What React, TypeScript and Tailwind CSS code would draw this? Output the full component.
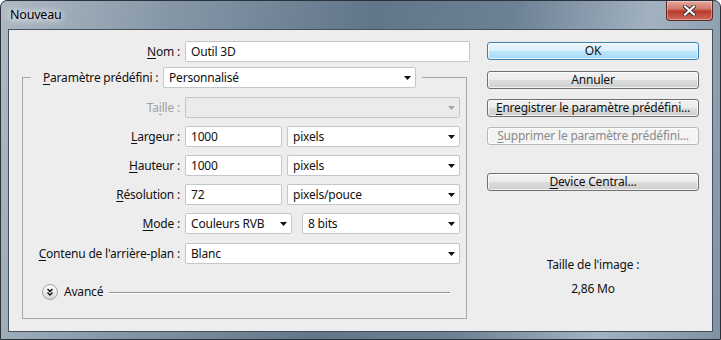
import clsx from "clsx";
import type { ReactNode } from "react";

function Arrow({ disabled }: { disabled?: boolean }) {
  return (
    <svg width="7" height="4" viewBox="0 0 7 4" className="shrink-0">
      <path d="M0 0h7L3.5 4z" fill={disabled ? "#a8a8a8" : "#111"} />
    </svg>
  );
}

function Select({ value, className, disabled }: { value?: string; className?: string; disabled?: boolean }) {
  return (
    <div
      className={clsx(
        "flex h-[21px] shrink-0 items-center justify-between rounded-[2px] border border-[#c4c6ca] pl-[5px] pr-[4px]",
        disabled ? "bg-[#ebebeb]" : "bg-white",
        className
      )}
    >
      <span>{value}</span>
      <Arrow disabled={disabled} />
    </div>
  );
}

function Input({ value, className }: { value: string; className?: string }) {
  return (
    <div
      className={clsx(
        "flex h-[21px] shrink-0 items-center rounded-[2px] border border-[#c4c6ca] bg-white pl-[5px]",
        className
      )}
    >
      {value}
    </div>
  );
}

function Row({ label, children }: { label: ReactNode; children: ReactNode }) {
  return (
    <div className="flex h-[21px] items-center">
      <div className="w-[157px] text-right">{label}</div>
      <div className="ml-[5px] flex items-center">{children}</div>
    </div>
  );
}

function Btn({ children, kind, className }: { children: ReactNode; kind?: "default" | "disabled"; className?: string }) {
  return (
    <div
      className={clsx(
        "flex h-[18px] w-[212px] items-center justify-center rounded-[3px] border leading-none shadow-[inset_0_0_0_1px_rgba(255,255,255,0.7)]",
        kind === "default" &&
          "border-[#3c7fb1] bg-[linear-gradient(#eaf6fd,#d9f0fc_50%,#bee6fd_50%,#a7d9f5)]",
        kind === "disabled" && "border-[#b5b9bc] bg-[#f4f4f4] text-[#8a8a8a]",
        !kind && "border-[#707070] bg-[linear-gradient(#f2f2f2,#ebebeb_50%,#dddddd_50%,#cfcfcf)]",
        className
      )}
    >
      {children}
    </div>
  );
}

export default function App() {
  return (
    <div className="relative flex h-[340px] w-[721px] flex-col rounded-t-[7px] border border-[#2a333b] bg-[linear-gradient(100deg,#aeb9c3,#8597a7_22%,#62768a_48%,#6d8195_66%,#a2b2c0_84%,#7f92a4)] [font-family:'Noto_Sans',sans-serif] text-[12px] tracking-[-0.2px] text-[#111]">
      <div className="flex h-[28px] items-start justify-between pl-[9px] pr-[7px]">
        <span className="pt-[5px] text-[12.5px] text-black [text-shadow:0_0_6px_#fff,0_0_10px_#fff]">Nouveau</span>
        <div className="flex h-[20px] w-[47px] items-center justify-center rounded-b-[4px] border border-t-0 border-[#5a2a24] bg-[linear-gradient(#e6a89e,#d27a6d_40%,#b93a2c_55%,#cf6a5a)] shadow-[inset_0_0_0_1px_rgba(255,255,255,0.35)]">
          <svg width="13" height="11" viewBox="0 0 13 11">
            <path d="M2 1.5l9 8M11 1.5l-9 8" stroke="#3a3a3a" strokeWidth="4" strokeLinecap="square" />
            <path d="M2 1.5l9 8M11 1.5l-9 8" stroke="#fff" strokeWidth="2" strokeLinecap="square" />
          </svg>
        </div>
      </div>

      <div className="ml-[7px] mr-[7px] flex h-[303px] border border-[#45525d] bg-[#ededed]">
        <div className="flex w-[478px] flex-col pt-[11px]">
          <div className="flex h-[21px] items-center">
            <div className="w-[171px] text-right">
              <u className="underline-offset-2">N</u>om :
            </div>
            <Input value="Outil 3D" className="ml-[5px] w-[285px]" />
          </div>

          <fieldset className="ml-[13px] mt-[5px] w-[445px] border border-[#a8a8a8] pb-[17px]">
            <legend className="ml-[8px] flex items-center pl-[12px] pr-[6px]">
              <span className="w-[120px]">
                <u className="underline-offset-2">P</u>aramètre prédéfini :
              </span>
              <Select value="Personnalisé" className="w-[253px]" />
            </legend>

            <div className="flex flex-col gap-[8px] pt-[9px]">
              <Row
                label={
                  <span className="text-[#a0a0a0]">
                    Ta<u className="underline-offset-2">i</u>lle :
                  </span>
                }
              >
                <Select disabled className="w-[275px]" />
              </Row>
              <Row label={<><u className="underline-offset-2">L</u>argeur :</>}>
                <Input value="1000" className="w-[97px]" />
                <Select value="pixels" className="ml-[5px] w-[173px]" />
              </Row>
              <Row label={<><u className="underline-offset-2">H</u>auteur :</>}>
                <Input value="1000" className="w-[97px]" />
                <Select value="pixels" className="ml-[5px] w-[173px]" />
              </Row>
              <Row label={<><u className="underline-offset-2">R</u>ésolution :</>}>
                <Input value="72" className="w-[97px]" />
                <Select value="pixels/pouce" className="ml-[5px] w-[173px]" />
              </Row>
              <Row label={<><u className="underline-offset-2">M</u>ode :</>}>
                <Select value="Couleurs RVB" className="w-[107px]" />
                <Select value="8 bits" className="ml-[10px] w-[158px]" />
              </Row>
              <div className="mt-[1px]">
                <Row label={<><u className="underline-offset-2">C</u>ontenu de l'arrière-plan :</>}>
                  <Select value="Blanc" className="w-[275px]" />
                </Row>
              </div>
            </div>

            <div className="mt-[19px] flex items-center pl-[19px]">
              <svg width="16" height="16" viewBox="0 0 16 16">
                <defs>
                  <linearGradient id="av" x1="0" y1="0" x2="0" y2="1">
                    <stop offset="0" stopColor="#ffffff" />
                    <stop offset="1" stopColor="#d6d6d6" />
                  </linearGradient>
                </defs>
                <circle cx="8" cy="8" r="7.5" fill="url(#av)" stroke="#a3a3a3" />
                <path d="M5.5 5l2.5 2.5L10.5 5M5.5 8.5l2.5 2.5 2.5-2.5" fill="none" stroke="#111" strokeWidth="1.4" />
              </svg>
              <span className="ml-[6px]">Avancé</span>
              <div className="ml-[6px] h-px w-[341px] bg-[#8f8f8f] shadow-[0_1px_0_#fff]" />
            </div>
          </fieldset>
        </div>

        <div className="flex w-[212px] flex-col items-center pt-[12px]">
          <Btn kind="default">OK</Btn>
          <Btn className="mt-[11px]">Annuler</Btn>
          <Btn className="mt-[10px]">
            <span>
              <u className="underline-offset-2">E</u>nregistrer le paramètre prédéfini...
            </span>
          </Btn>
          <Btn kind="disabled" className="mt-[10px]">
            <span>
              <u className="underline-offset-2">S</u>upprimer le paramètre prédéfini...
            </span>
          </Btn>
          <Btn className="mt-[28px]">
            <span>
              <u className="underline-offset-2">D</u>evice Central...
            </span>
          </Btn>
          <div className="mt-[66px] leading-[16px]">Taille de l'image :</div>
          <div className="mt-[8px] leading-[16px]">2,86 Mo</div>
        </div>
      </div>
    </div>
  );
}
